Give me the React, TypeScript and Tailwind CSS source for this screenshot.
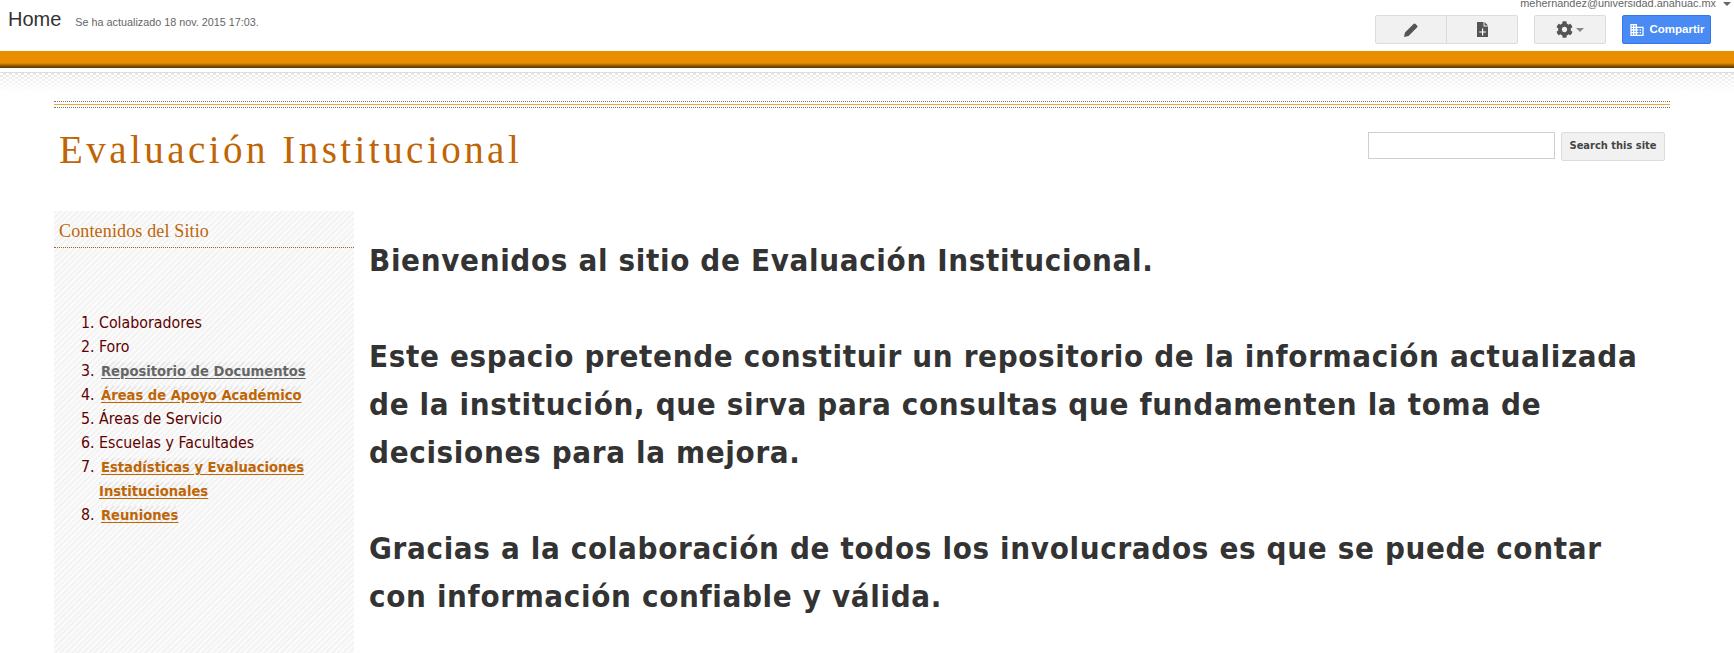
import { MdDomain } from "react-icons/md";
import { FaCog } from "react-icons/fa";

const arial = "font-['Liberation_Sans',Arial,sans-serif]";
const tahoma = "font-['DejaVu_Sans_Condensed','DejaVu_Sans',sans-serif]";
const stripes =
  "bg-[repeating-linear-gradient(135deg,#f3f3f3_0px,#f3f3f3_2px,#fbfbfb_2px,#fbfbfb_4px)]";
const linkStripes =
  "bg-[repeating-linear-gradient(135deg,#e9e9e9_0px,#e9e9e9_2px,#fbfbfb_2px,#fbfbfb_4px)]";

const items = [
  { label: "Colaboradores" },
  { label: "Foro" },
  { label: "Repositorio de Documentos", link: "gray" },
  { label: "Áreas de Apoyo Académico", link: "orange" },
  { label: "Áreas de Servicio" },
  { label: "Escuelas y Facultades" },
  { label: "Estadísticas y Evaluaciones Institucionales", link: "orange" },
  { label: "Reuniones", link: "orange" },
];

function PencilIcon() {
  return (
    <svg viewBox="0 0 14 14" className="h-[14px] w-[14px] fill-[#555]">
      <path d="M0 14 L1 9.5 L9.5 1 a1.4 1.4 0 0 1 2 0 L13 2.5 a1.4 1.4 0 0 1 0 2 L4.5 13 Z" />
    </svg>
  );
}

function NewPageIcon() {
  return (
    <svg viewBox="0 0 11 15" className="h-[15px] w-[11px]">
      <path d="M0 0 H6.5 V4.5 H11 V15 H0 Z" fill="#555" />
      <path d="M7.5 0 L11 3.5 H7.5 Z" fill="#555" />
      <path d="M5 6.5 H6.2 V9.4 H9 V10.6 H6.2 V13.5 H5 V10.6 H2.2 V9.4 H5 Z" fill="#fff" />
    </svg>
  );
}

export default function App() {
  return (
    <div className="h-[653px] overflow-hidden bg-white">
      {/* Top bar */}
      <header className={`flex h-[51px] justify-between ${arial}`}>
        <div className="flex items-start pl-2 pt-[7px]">
          <span className="text-[20px] leading-[24px] text-[#333]">Home</span>
          <span className="ml-[14px] mt-[8px] text-[10.8px] leading-[14px] text-[#666]">
            Se ha actualizado 18 nov. 2015 17:03.
          </span>
        </div>
        <div className="flex flex-col items-end pr-[23px]">
          <div className="-mr-[20px] -mt-[3px] flex h-[12px] items-center text-[10.9px] text-[#666]">
            mehernandez@universidad.anahuac.mx
            <span className="ml-[7px] mt-[1px] h-0 w-0 border-x-[4px] border-t-[4px] border-x-transparent border-t-[#666]" />
          </div>
          <div className="mt-[6px] flex items-start">
            <div className="flex h-[29px] w-[143px] rounded-[2px] border border-[#dcdcdc] bg-[#f1f1f1]">
              <div className="flex w-[71px] items-center justify-center border-r border-[#dcdcdc]">
                <PencilIcon />
              </div>
              <div className="flex flex-1 items-center justify-center">
                <NewPageIcon />
              </div>
            </div>
            <div className="ml-[16px] flex h-[29px] w-[72px] items-center justify-center rounded-[2px] border border-[#dcdcdc] bg-[#f1f1f1]">
              <FaCog className="h-[17px] w-[17px] text-[#555]" />
              <span className="ml-[3px] h-0 w-0 border-x-[4px] border-t-[4px] border-x-transparent border-t-[#888]" />
            </div>
            <button className="ml-[16px] flex h-[29px] w-[89px] items-center justify-center rounded-[2px] border border-[#3079ed] bg-[#4a8af4] text-[11.5px] font-bold text-white">
              <MdDomain className="mr-[5px] h-[16px] w-[16px]" />
              Compartir
            </button>
          </div>
        </div>
      </header>

      {/* Orange band */}
      <div className="h-[17px] bg-[linear-gradient(to_bottom,#e88e00_0px,#e88e00_12px,#c77a00_13px,#a86400_14px,#8a5200_15px,#5a3300_17px)]" />
      <div className="mt-[4px] h-[20px] border-t border-[#dddddd] bg-[linear-gradient(to_bottom,rgba(255,255,255,0),#ffffff),repeating-conic-gradient(#e6e6e6_0_25%,#ffffff_0_50%)] bg-[length:100%_100%,6px_4px]" />

      {/* Site frame */}
      <div className="px-[54px] pt-[9px]">
        <div className="flex h-[7px] w-[1616px] flex-col justify-between">
          <div className="border-t border-dotted border-[#777]" />
          <div className="border-t border-[#f0a830]" />
          <div className="border-t border-dotted border-[#777]" />
        </div>

        <div className="flex h-[103px] w-[1616px] items-start justify-between">
          <h1 className="mt-[17px] pl-[5px] font-['Liberation_Serif',serif] text-[39px] font-normal leading-[50px] tracking-[3.46px] text-[#bf6505]">
            Evaluación Institucional
          </h1>
          <div className="mr-[5px] mt-[24px] flex items-start">
            <input className="h-[27px] w-[187px] border border-[#cfcfcf] bg-white" />
            <button className={`ml-[6px] h-[29px] w-[104px] rounded-[2px] border border-[#dcdcdc] bg-[#f1f1f1] text-[11px] font-bold text-[#444] ${tahoma}`}>
              Search this site
            </button>
          </div>
        </div>

        <div className="flex">
          {/* Sidebar */}
          <aside className={`h-[442px] w-[300px] shrink-0 ${stripes}`}>
            <div className="h-[37px] border-b border-dotted border-[#a8601a] pl-[5px] pt-[10px] font-['Liberation_Serif',serif] text-[18px] leading-[20px] tracking-[0.15px] text-[#bf6505]">
              Contenidos del Sitio
            </div>
            <ol className={`mt-[63px] list-decimal pl-[45px] pr-[20px] text-[15.8px] leading-[24px] text-[#600000] ${tahoma}`}>
              {items.map((item) => (
                <li key={item.label}>
                  {item.link ? (
                    <a
                      className={`ml-[2px] text-[14.6px] font-bold underline underline-offset-2 ${linkStripes} ${
                        item.link === "gray" ? "text-[#666]" : "text-[#bf6505]"
                      }`}
                    >
                      {item.label}
                    </a>
                  ) : (
                    item.label
                  )}
                </li>
              ))}
            </ol>
          </aside>

          {/* Main text */}
          <main className={`ml-[15px] w-[1290px] pt-[25px] text-[31px] font-bold leading-[48px] tracking-[0.66px] text-[#333] ${tahoma}`}>
            <p>Bienvenidos al sitio de Evaluación Institucional.</p>
            <p className="mt-[48px]">
              Este espacio pretende constituir un repositorio de la información actualizada de la institución, que sirva para consultas que fundamenten la toma de decisiones para la mejora.
            </p>
            <p className="mt-[48px]">
              Gracias a la colaboración de todos los involucrados es que se puede contar con información confiable y válida.
            </p>
          </main>
        </div>
      </div>
    </div>
  );
}
